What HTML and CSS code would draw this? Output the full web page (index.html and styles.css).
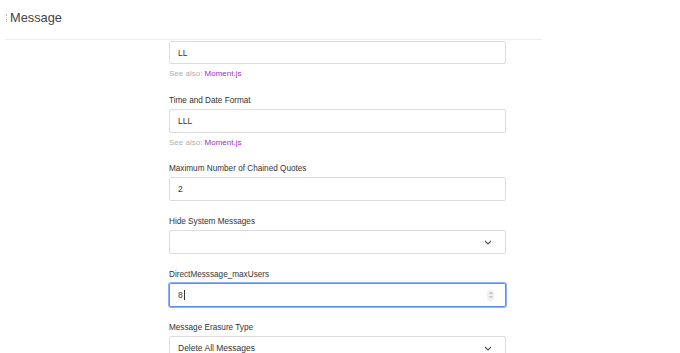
FILE: index.html
```html
<!DOCTYPE html>
<html>
<head>
<meta charset="utf-8">
<link rel="stylesheet" href="styles.css">
</head>
<body>
<div class="page">
  <header class="header">
    <span class="grip"></span>
    <h1 class="title">Message</h1>
  </header>
  <main class="content">
    <form class="form">
      <div class="field first">
        <div class="input">LL</div>
        <div class="hint">See also: <a class="link">Moment.js</a></div>
      </div>
      <div class="field">
        <label class="label">Time and Date Format</label>
        <div class="input">LLL</div>
        <div class="hint">See also: <a class="link">Moment.js</a></div>
      </div>
      <div class="field">
        <label class="label">Maximum Number of Chained Quotes</label>
        <div class="input">2</div>
      </div>
      <div class="field">
        <label class="label">Hide System Messages</label>
        <div class="input select"><span></span>
          <svg class="chev" width="8" height="5" viewBox="0 0 8 5"><path d="M1 1l3 3 3-3" fill="none" stroke="#555" stroke-width="1.1"/></svg>
        </div>
      </div>
      <div class="field">
        <label class="label">DirectMesssage_maxUsers</label>
        <div class="input focus"><span class="val">8<i class="caret"></i></span>
          <span class="spin"><svg width="4" height="8" viewBox="0 0 4 8"><path d="M0.5 3L2 1.3 3.5 3M0.5 5L2 6.7 3.5 5" fill="none" stroke="#999" stroke-width="0.8"/></svg></span>
        </div>
      </div>
      <div class="field">
        <label class="label">Message Erasure Type</label>
        <div class="input select"><span>Delete All Messages</span>
          <svg class="chev" width="8" height="5" viewBox="0 0 8 5"><path d="M1 1l3 3 3-3" fill="none" stroke="#555" stroke-width="1.1"/></svg>
        </div>
      </div>
    </form>
  </main>
</div>
</body>
</html>
```
FILE: styles.css
```css
html, body {
  margin: 0;
  padding: 0;
  background: #fff;
  font-family: "Liberation Sans", Arial, sans-serif;
  color: #2f343d;
  overflow: hidden;
}
.page {
  width: 680px;
  height: 353px;
  overflow: hidden;
}
.header {
  height: 39px;
  margin: 0 137px 0 5px;
  border-bottom: 1px solid #eeeeee;
  display: flex;
  align-items: center;
  gap: 2px;
  padding-left: 1px;
  box-sizing: content-box;
}
.grip {
  width: 1px;
  height: 8px;
  border-left: 1px dotted #bbb;
  margin-top: -3px;
}
.title {
  margin: 0 0 5px 0;
  font-size: 12.8px;
  font-weight: 400;
  color: #444;
}
.content {
  padding-top: 1px;
}
.form {
  width: 337px;
  margin-left: 169px;
  display: flex;
  flex-direction: column;
}
.field {
  display: flex;
  flex-direction: column;
  margin-bottom: 15px;
}
.first {
  margin-bottom: 16px;
}
.label {
  font-size: 8.2px;
  line-height: 12px;
  color: #333;
  margin-bottom: 2px;
}
.input {
  height: 24px;
  box-sizing: border-box;
  border: 1px solid #dcdcdc;
  border-radius: 2px;
  padding: 0 8px;
  font-size: 8.5px;
  color: #333;
  display: flex;
  align-items: center;
  justify-content: space-between;
}
.first .input {
  height: 23px;
}
.hint {
  font-size: 8px;
  line-height: 10px;
  margin-top: 5px;
  color: #b0b0b0;
}
.link {
  color: #a12dc9;
}
.chev {
  margin-right: 5px;
}
.focus {
  border: 1px solid #5c8ef2;
  box-shadow: 0 0 0 1px #8db1f7;
}
.val {
  display: flex;
  align-items: center;
}
.caret {
  display: inline-block;
  width: 1px;
  height: 10px;
  background: #333;
  margin-left: 1px;
}
.spin {
  width: 7px;
  height: 11px;
  background: #f0f0f0;
  border-radius: 3px;
  display: flex;
  align-items: center;
  justify-content: center;
  margin-right: 3px;
}
```
